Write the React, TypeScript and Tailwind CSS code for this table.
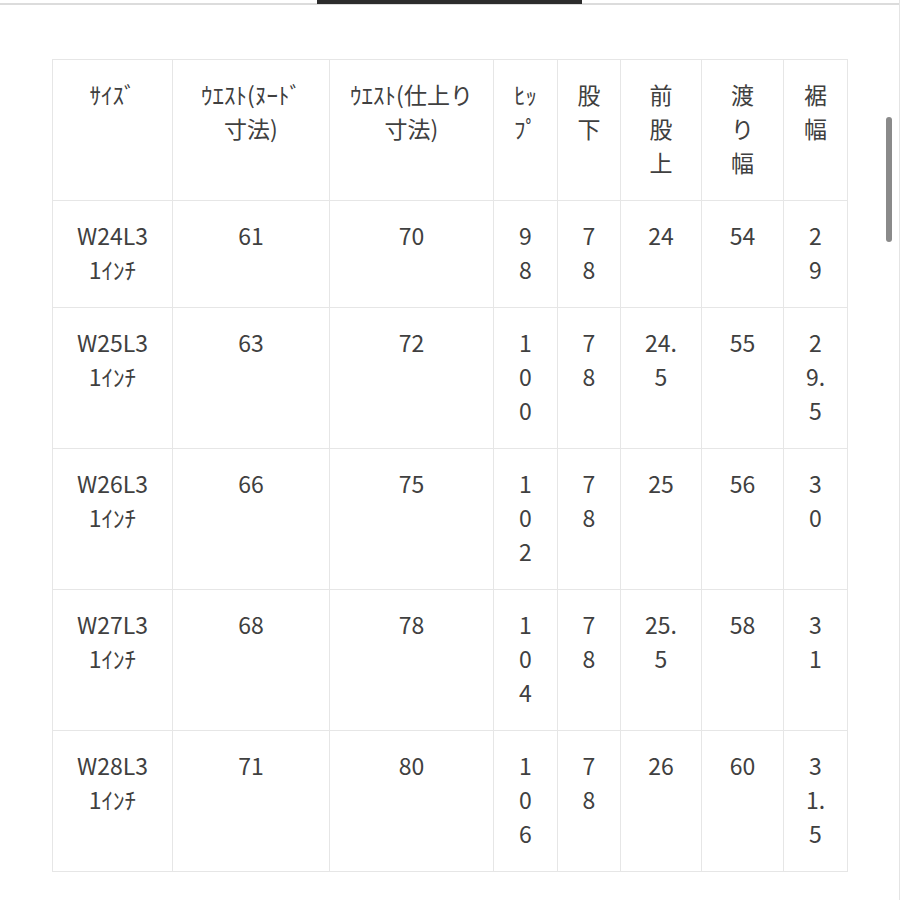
const header = ['ｻｲｽﾞ', 'ｳｴｽﾄ(ﾇｰﾄﾞ\n寸法)', 'ｳｴｽﾄ(仕上り\n寸法)', 'ﾋｯ\nﾌﾟ', '股\n下', '前\n股\n上', '渡\nり\n幅', '裾\n幅']

const rows = [
  ['W24L3\n1ｲﾝﾁ', '61', '70', '9\n8', '7\n8', '24', '54', '2\n9'],
  ['W25L3\n1ｲﾝﾁ', '63', '72', '1\n0\n0', '7\n8', '24.\n5', '55', '2\n9.\n5'],
  ['W26L3\n1ｲﾝﾁ', '66', '75', '1\n0\n2', '7\n8', '25', '56', '3\n0'],
  ['W27L3\n1ｲﾝﾁ', '68', '78', '1\n0\n4', '7\n8', '25.\n5', '58', '3\n1'],
  ['W28L3\n1ｲﾝﾁ', '71', '80', '1\n0\n6', '7\n8', '26', '60', '3\n1.\n5'],
]

const widths = ['w-[120px]', 'w-[157px]', 'w-[164px]', 'w-[64px]', 'w-[63px]', 'w-[81px]', 'w-[82px]', 'w-[64px]']

const cell = 'border border-[#e6e6e6] px-0 pt-[17px] pb-[21px] align-top text-center whitespace-pre-line'

export default function App() {
  return (
    <div
      className="relative h-[900px] w-[900px] overflow-hidden bg-white border-r border-[#e4e4e4] text-[23px] leading-[34px] text-[#404040]"
      style={{ fontFamily: '"Noto Sans CJK JP", "Noto Sans", sans-serif' }}
    >
      {/* タブの下線 */}
      <div className="h-[5px] border-b-2 border-[#dcdcdc]">
        <div className="mx-auto h-[4px] w-[265px] bg-[#2c2c2c]" />
      </div>

      <div className="pl-[52px] pt-[54px]">
        <table className="table-fixed border-collapse w-[795px]">
          <colgroup>
            {widths.map((w, i) => (
              <col key={i} className={w} />
            ))}
          </colgroup>
          <thead>
            <tr>
              {header.map((h, i) => (
                <th key={i} className={`${cell} font-normal`}>
                  {h}
                </th>
              ))}
            </tr>
          </thead>
          <tbody>
            {rows.map((r, ri) => (
              <tr key={ri}>
                {r.map((c, ci) => (
                  <td key={ci} className={cell}>
                    {c}
                  </td>
                ))}
              </tr>
            ))}
          </tbody>
        </table>
      </div>

      {/* スクロールバー */}
      <div className="absolute right-[7px] top-[117px] h-[125px] w-[6px] rounded-full bg-[#8a8a8a]" />
    </div>
  )
}
